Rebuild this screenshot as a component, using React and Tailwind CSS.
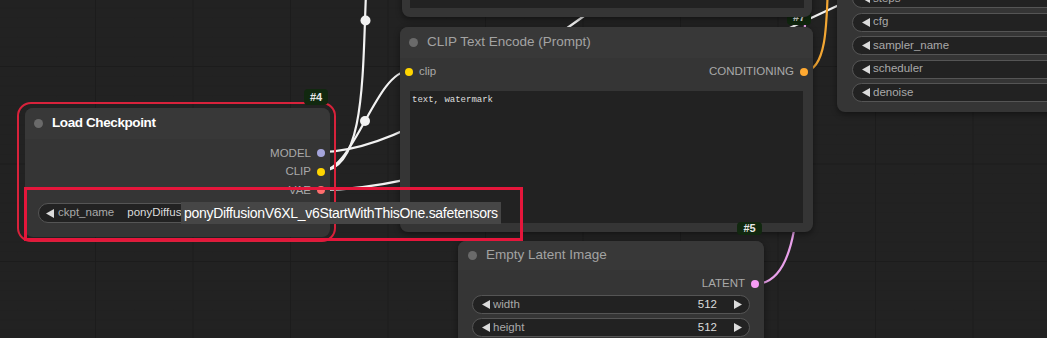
const ArrowL = () => (
  <svg width="8" height="9" viewBox="0 0 8 9" className="shrink-0">
    <path d="M8 0 L0 4.5 L8 9Z" fill="#dcdcdc" />
  </svg>
)

const ArrowR = () => (
  <svg width="8" height="9" viewBox="0 0 8 9" className="shrink-0">
    <path d="M0 0 L8 4.5 L0 9Z" fill="#dcdcdc" />
  </svg>
)

const Output = ({ label, dot }) => (
  <div className="flex h-[18.5px] items-center justify-end gap-[6px] pr-[5px]">
    <span className="text-[11.5px] leading-none text-[#a9a9a9]">{label}</span>
    <span className={`h-[8px] w-[8px] rounded-full ${dot}`} />
  </div>
)

const Title = ({ children, selected }) => (
  <div className="flex h-[31px] items-center gap-[9px] rounded-t-[8px] bg-[#383838] pl-[9px]">
    <span className="h-[9px] w-[9px] rounded-full bg-[#6a6a6a]" />
    {selected ? (
      <span className="text-[13.5px] font-bold tracking-[-0.4px] text-white">{children}</span>
    ) : (
      <span className="text-[13.5px] text-[#a3a3a3]">{children}</span>
    )}
  </div>
)

const Pill = ({ label, value, className = '' }) => (
  <div className={`flex h-[19px] items-center rounded-full border border-[#555] bg-[#222] pl-[9px] pr-[7px] text-[11.5px] ${className}`}>
    <ArrowL />
    <span className="ml-[3px] text-[#a9a9a9]">{label}</span>
    <span className="ml-auto text-[#dcdcdc]">{value}</span>
    <span className="ml-[17px]"><ArrowR /></span>
  </div>
)

const Badge = ({ children, className }) => (
  <div className={`absolute flex items-center justify-center rounded-[4px] bg-[#11280f] text-[11px] font-bold text-[#e8e8e8] ${className}`}>
    {children}
  </div>
)

const Grid = () => (
  <svg className="absolute inset-0" width="1047" height="338">
    <defs>
      <pattern id="minor" width="9.75" height="9.75" x="-2.5" y="66" patternUnits="userSpaceOnUse">
        <path d="M9.75 0 L0 0 0 9.75" fill="none" stroke="#202020" strokeWidth="1" />
      </pattern>
      <pattern id="major" width="97.5" height="97.5" x="-2.5" y="66" patternUnits="userSpaceOnUse">
        <path d="M97.5 0 L0 0 0 97.5" fill="none" stroke="#1a1a1a" strokeWidth="1.5" />
      </pattern>
    </defs>
    <rect width="1047" height="338" fill="url(#minor)" />
    <rect width="1047" height="338" fill="url(#major)" />
  </svg>
)

const Links = () => (
  <svg className="absolute inset-0" width="1047" height="338" fill="none">
    <g stroke="#f2f2f2" strokeWidth="2.2">
      <path d="M321 171 C399 171 331 -130 409 -130" />
      <path d="M321 171 C354 171 376 71 409 71" />
      <path d="M321 152 C468.5 152 699.5 -120 847 -120" />
      <path d="M321 190 C567 190 1004 -130 1250 -130" />
    </g>
    <path d="M804 71 C848 71 808 -110 852 -110" stroke="#f2a633" strokeWidth="2.2" />
    <path d="M755 284 C841.6 284 760.4 -50 847 -50" stroke="#e8a0ea" strokeWidth="2.2" />
    <circle cx="365.5" cy="20.5" r="5" fill="#f2f2f2" />
    <circle cx="365" cy="121" r="5" fill="#f2f2f2" />
  </svg>
)

export default function App() {
  return (
    <div className="relative h-[338px] w-[1047px] overflow-hidden bg-[#222] font-['Liberation_Sans',Arial,sans-serif]">
      <Grid />
      <Links />

      {/* badge of the CLIP node, mostly under the node above */}
      <Badge className="left-[787px] top-[9px] h-[16px] w-[24px]">#7</Badge>

      {/* node above, only its bottom is in view */}
      <div className="absolute left-[402px] top-[-100px] flex h-[117px] w-[410px] flex-col justify-end rounded-b-[8px] bg-[#353535] px-[8px] pb-[9px] shadow-[0_2px_6px_rgba(0,0,0,0.45)]">
        <div className="h-[60px] bg-[#222]" />
      </div>

      {/* KSampler, runs off the right edge */}
      <div className="absolute left-[837px] top-[-70px] flex h-[182px] w-[330px] flex-col justify-end gap-[4.5px] rounded-bl-[8px] bg-[#353535] pb-[10px] pl-[15px] shadow-[0_2px_6px_rgba(0,0,0,0.45)]">
        <Pill label="steps" value="20" />
        <Pill label="cfg" value="8.0" />
        <Pill label="sampler_name" value="euler" />
        <Pill label="scheduler" value="normal" />
        <Pill label="denoise" value="1.00" />
      </div>

      {/* CLIP Text Encode */}
      <div className="absolute left-[400px] top-[27px] h-[205px] w-[413px] rounded-[8px] bg-[#353535] shadow-[0_2px_6px_rgba(0,0,0,0.45)]">
        <Title>CLIP Text Encode (Prompt)</Title>
        <div className="mt-[4.5px] flex h-[18.5px] items-center justify-between pl-[5px]">
          <div className="flex items-center gap-[6px]">
            <span className="h-[8px] w-[8px] rounded-full bg-[#ffd500]" />
            <span className="text-[11.5px] leading-none text-[#a9a9a9]">clip</span>
          </div>
          <Output label="CONDITIONING" dot="bg-[#ffa931]" />
        </div>
        <div className="mx-[10px] mt-[9.5px] h-[132px] bg-[#222] pl-[2px] pt-[3px] font-['Liberation_Mono',monospace] text-[9px] text-[#dedede]">
          text, watermark
        </div>
      </div>

      {/* Empty Latent Image */}
      <Badge className="left-[737px] top-[222px] h-[13px] w-[25px]">#5</Badge>
      <div className="absolute left-[458px] top-[241px] h-[130px] w-[306px] rounded-[8px] bg-[#353535] shadow-[0_2px_6px_rgba(0,0,0,0.45)]">
        <div className="flex h-[29px] items-center gap-[9px] rounded-t-[8px] bg-[#383838] pl-[10px]">
          <span className="h-[9px] w-[9px] rounded-full bg-[#6a6a6a]" />
          <span className="text-[13.5px] text-[#a3a3a3]">Empty Latent Image</span>
        </div>
        <div className="pt-[4.75px]">
          <Output label="LATENT" dot="bg-[#f79cf5]" />
        </div>
        <div className="mx-[14px] mt-[2px] flex flex-col gap-[4px]">
          <Pill label="width" value="512" />
          <Pill label="height" value="512" />
        </div>
      </div>

      {/* Load Checkpoint (selected) */}
      <div className="absolute left-[17px] top-[102px] h-[140px] w-[319px] rounded-[14px] border-2 border-[#d8223b]" />
      <Badge className="left-[304px] top-[89px] h-[16px] w-[24px]">#4</Badge>
      <div className="absolute left-[25px] top-[108px] h-[129px] w-[305px] rounded-[8px] bg-[#353535]">
        <Title selected>Load Checkpoint</Title>
        <div className="pt-[5px]">
          <Output label="MODEL" dot="bg-[#a5a5dc]" />
          <Output label="CLIP" dot="bg-[#ffd500]" />
          <Output label="VAE" dot="bg-[#ff6e6e]" />
        </div>
        <div className="mx-[13px] mt-[3.5px] flex h-[20px] items-center overflow-hidden rounded-full border border-[#555] bg-[#222] pl-[7px] pr-[7px] text-[11.5px]">
          <ArrowL />
          <span className="ml-[4px] shrink-0 text-[#a9a9a9]">ckpt_name</span>
          <span className="ml-[13px] min-w-0 flex-1 truncate text-[#dcdcdc]">ponyDiffusionV6XL_v6StartWithThisOne.safetensors</span>
          <span className="ml-[6px]"><ArrowR /></span>
        </div>
      </div>

      {/* tooltip */}
      <div className="absolute left-[181px] top-[202px] flex h-[22px] items-center bg-[#464646] pl-[3px] pr-[3px] text-[14px] tracking-[-0.3px] text-white">
        ponyDiffusionV6XL_v6StartWithThisOne.safetensors
      </div>

      {/* annotation frame */}
      <div className="absolute left-[24px] top-[187px] h-[54px] w-[499px] border-[3px] border-[#e5163b]" />
    </div>
  )
}
